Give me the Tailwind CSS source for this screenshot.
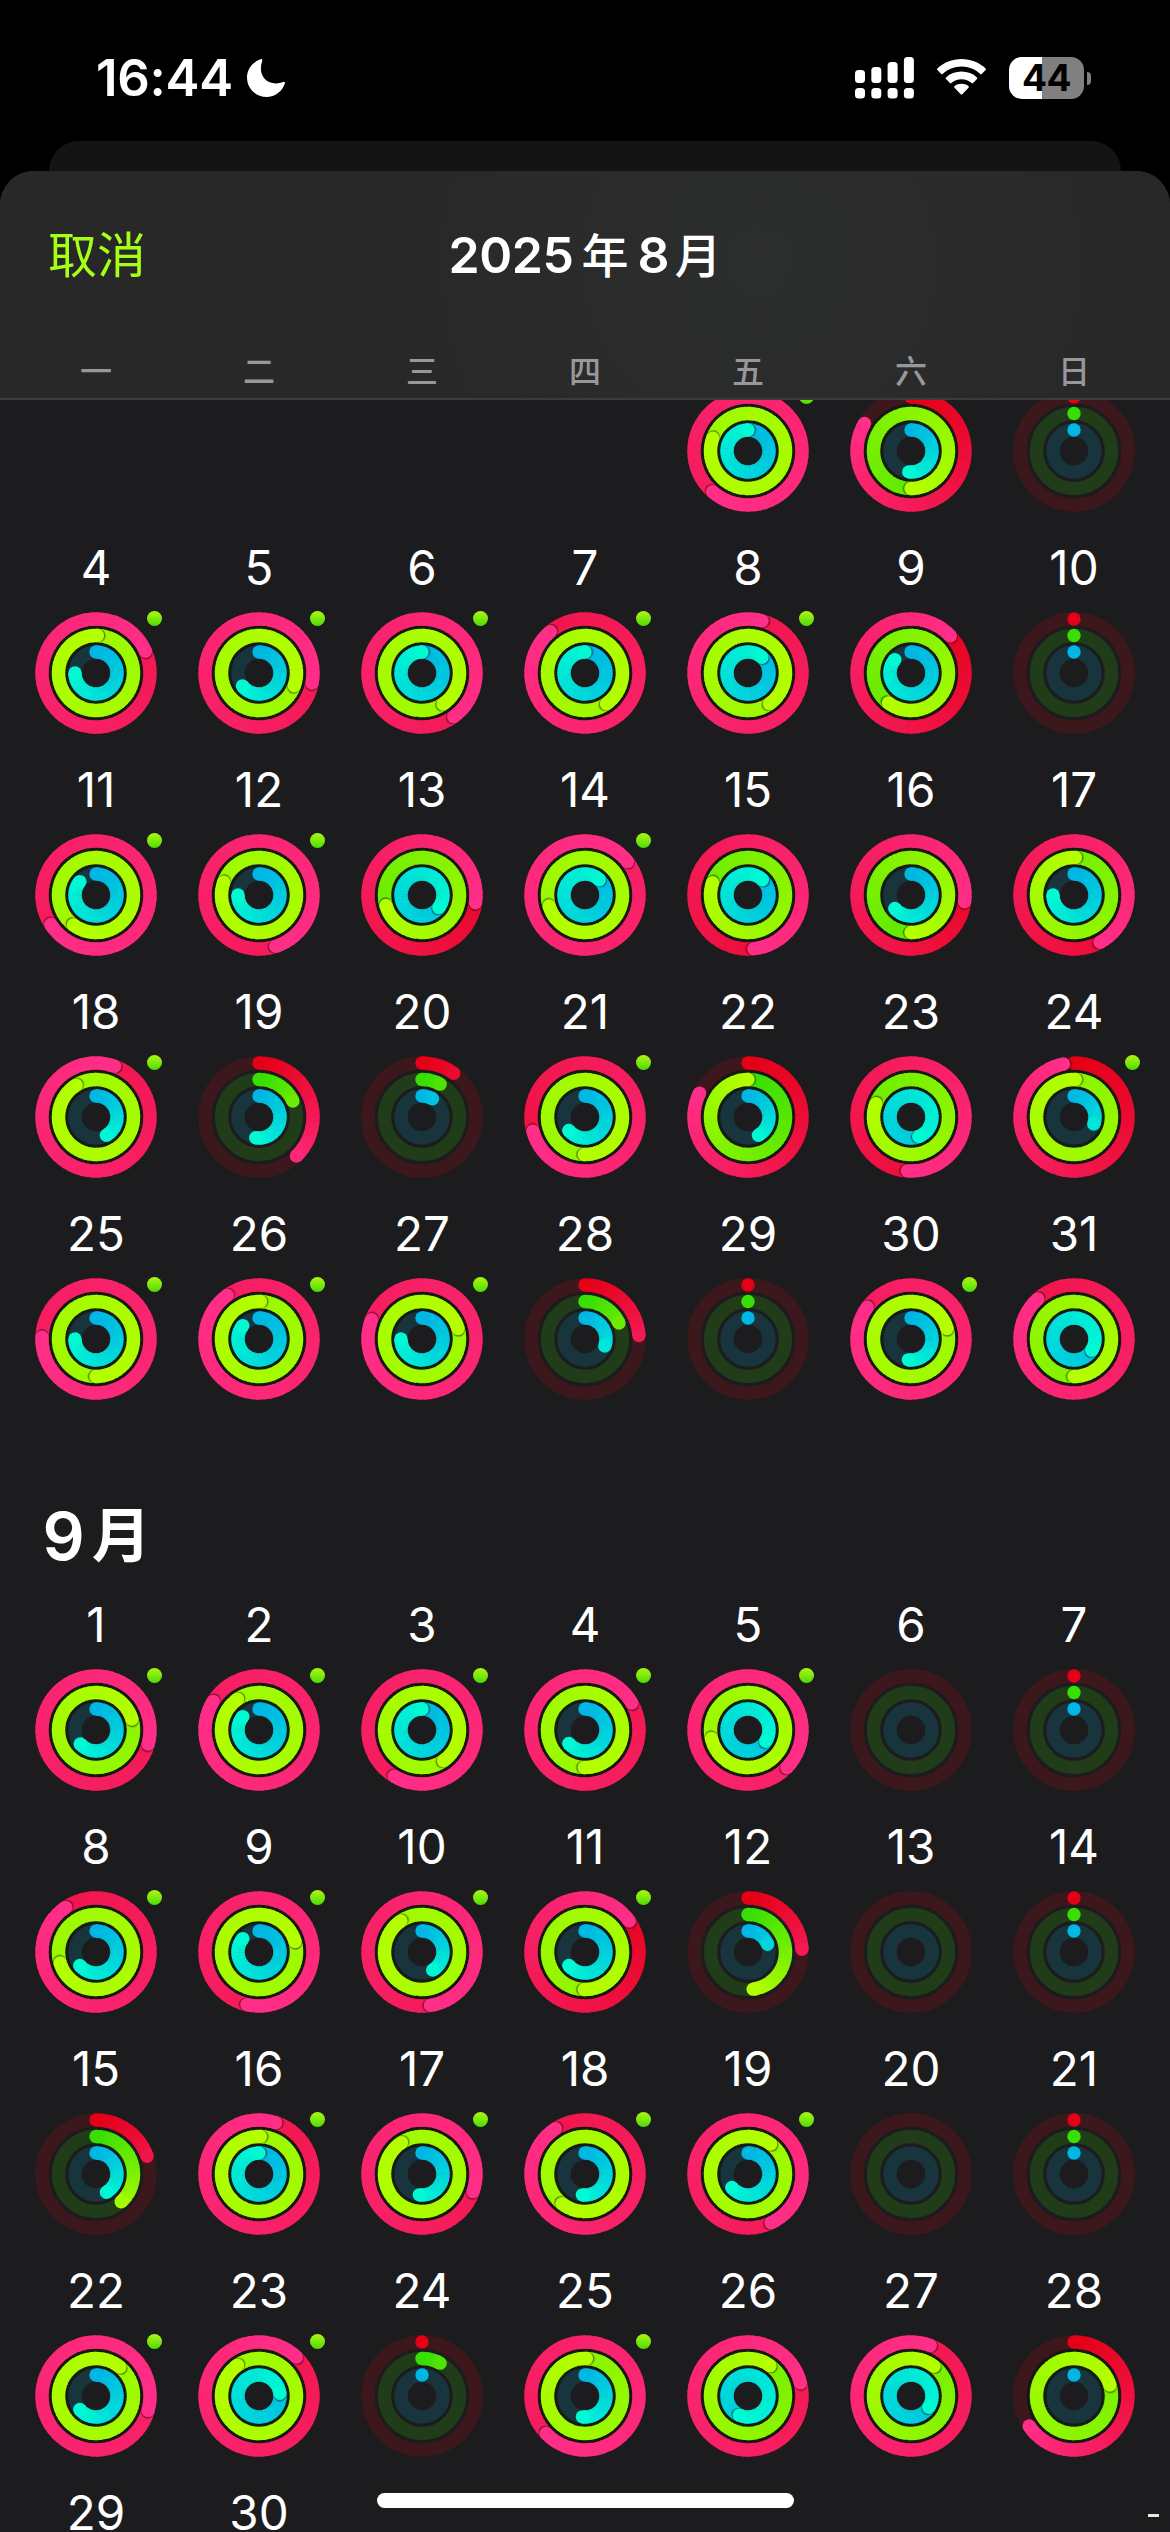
<!DOCTYPE html>
<html lang="zh-CN">
<head>
    <meta charset="UTF-8">
    <meta name="viewport" content="width=device-width, initial-scale=1.0">
    <title>健身记录</title>
    <script src="https://cdn.jsdelivr.net/npm/@tailwindcss/browser@4"></script>
</head>
<style>
    body {
        font-family: Inter, 'Noto Sans CJK SC', sans-serif;
    }
</style>
<body class="bg-black text-white">
    <div class="relative flex h-[2532px] w-[1170px] flex-col overflow-hidden">
        <!-- Status bar -->
        <div class="flex h-[141px] shrink-0 items-start justify-between pt-[56px] pr-[79px] pl-[96px]">
            <div class="flex h-[44px] items-center gap-[13px]">
                <span class="text-[51px] leading-[44px] font-semibold tracking-[-0.3px]">16:44</span>
                <svg class="h-[40px] w-[40px]" viewBox="0 0 40 40" fill="#fff">
                    <path d="M14.5 1.2C15.6 .7 16.6 1.7 16.2 2.9C15.3 5.4 14.9 7.9 14.9 10.5C14.9 19.4 21 25.4 29.8 25.4C32.6 25.4 35 24.9 37.1 24C38.3 23.5 39.3 24.5 38.8 25.7C35.9 33.6 28.8 39 20.6 39C9.7 39 1 30.3 1 19.4C1 11.2 6.3 4.2 14.5 1.2Z"/>
                </svg>
            </div>
            <div class="flex h-[44px] items-center">
                <svg class="h-[42px] w-[59px]" viewBox="0 0 59 42" fill="#fff">
                    <rect x="0" y="13" width="10" height="13" rx="3.5"/>
                    <rect x="16.3" y="10" width="10" height="16" rx="3.5"/>
                    <rect x="32.6" y="5" width="10" height="21" rx="3.5"/>
                    <rect x="48.9" y="0" width="10" height="26" rx="3.5"/>
                    <rect x="0" y="31" width="10" height="10.5" rx="3.5"/>
                    <rect x="16.3" y="31" width="10" height="10.5" rx="3.5"/>
                    <rect x="32.6" y="31" width="10" height="10.5" rx="3.5"/>
                    <rect x="48.9" y="31" width="10" height="10.5" rx="3.5"/>
                </svg>
                <svg class="ml-[22px] h-[38px] w-[51px]" viewBox="0 0 51 38" fill="#fff">
                    <path d="M25.5 7.600C32.700 7.600 39.300 10.400 44.300 15C44.700 15.400 45.300 15.400 45.700 15L49.600 11.100C50.100 10.600 50.100 9.900 49.600 9.400C43.300 3.500 34.800 0 25.500 0C16.200 0 7.700 3.500 1.400 9.400C.9 9.900 .9 10.600 1.400 11.100L5.300 15C5.700 15.400 6.300 15.400 6.700 15C11.700 10.400 18.300 7.600 25.500 7.600Z"/>
                    <path d="M25.5 20.200C29.400 20.200 33 21.700 35.700 24.100C36.100 24.500 36.700 24.500 37.100 24.100L41 20.100C41.500 19.600 41.500 18.900 41 18.400C36.900 14.600 31.500 12.500 25.500 12.500C19.500 12.500 14.100 14.600 10 18.400C9.500 18.900 9.500 19.600 10 20.100L13.900 24.100C14.300 24.500 14.900 24.500 15.300 24.100C18 21.700 21.600 20.200 25.500 20.200Z"/>
                    <path d="M32.5 28.800C33 28.300 33 27.600 32.400 27.100C30.500 25.600 28.100 24.800 25.500 24.800C22.900 24.800 20.500 25.600 18.600 27.100C18 27.600 18 28.300 18.500 28.800L24.700 35.200C25.200 35.700 25.800 35.700 26.300 35.200Z"/>
                </svg>
                <div class="ml-[22px] flex h-[42px] w-[75px] items-center justify-center rounded-[13px] bg-linear-to-r from-white from-44% to-[#808080] to-44%">
                    <span class="text-[37px] leading-[42px] font-bold tracking-[-0.5px] text-black">44</span>
                </div>
                <div class="ml-[3px] h-[13px] w-[4px] rounded-r-full bg-[#808080]"></div>
            </div>
        </div>

        <!-- Edge of the sheet behind -->
        <div class="mx-[49px] h-[30px] shrink-0 rounded-t-[30px] bg-[#141414]"></div>

        <!-- Sheet -->
        <div class="flex min-h-0 flex-1 flex-col overflow-hidden rounded-t-[34px] bg-[#1c1c1e]">
            <header class="z-10 flex h-[229px] shrink-0 flex-col border-b-2 border-[#3c3c3d] bg-[#282828] bg-[radial-gradient(circle_at_760px_90px,#2c2d2d,#282828_380px)]">
                <div class="grid h-[168px] grid-cols-3 items-center px-[48px]">
                    <button class="text-left text-[49px] leading-none text-[#a6ff17]">取消</button>
                    <h1 class="flex items-center justify-center text-[50px] leading-none font-semibold whitespace-nowrap"><span class="tracking-[-0.4px]">2025</span><span class="ml-[8px] text-[47px] font-medium">年</span><span class="ml-[9px]">8</span><span class="ml-[5px] text-[47px] font-medium">月</span></h1>
                </div>
                <div class="mx-[14.5px] grid grid-cols-7 pt-[17px] text-center text-[32px] leading-[32px] font-medium text-[#98989c]">
                    <span>一</span><span>二</span><span>三</span><span>四</span><span>五</span><span>六</span><span>日</span>
                </div>
            </header>

            <main class="min-h-0 flex-1 overflow-hidden px-[14.5px]">
                <div id="august" class="-mt-[84px] grid grid-cols-7 gap-y-[26px]"></div>
                <h2 class="flex h-[195px] items-center gap-[7px] pt-[76px] pl-[28px] text-[66px] font-semibold leading-none"><span>9</span><span class="text-[59px]">月</span></h2>
                <div id="september" class="grid grid-cols-7 gap-y-[26px]"></div>
            </main>
        </div>

        <!-- Home indicator -->
        <div class="absolute bottom-[24px] left-[377px] h-[15px] w-[417px] rounded-full bg-white"></div>
        <div class="absolute right-[11px] bottom-[15px] h-[3px] w-[11px] bg-white/90"></div>
    </div>

    <script>
        // Each day: [move, exercise, stand, award], in laps of the ring.
        // null = no data, 0 = only the starting dot
        const august = [
            [2.614, 5.805, 1, 1], [.835, 1.5, .517, 0], [0, 0, 0, 0],
            [2.184, 5.006, .75, 1], [2.28, 5.305, .645, 1], [2.4, 5.405, 1, 1], [1.889, 5.403, 1, 1], [2.042, 5.403, 1.115, 1], [1.13, 1.603, .86, 0], [0, 0, 0, 0],
            [2.658, 5.603, .86, 1], [2.45, 5.805, .75, 1], [1.273, 1.705, 1.352, 0], [3.144, 4.703, 1.12, 1], [1.483, 1.803, 1.12, 0], [1.27, 1.5, .64, 0], [1.42, 2.006, .75, 0],
            [2.056, 5.911, .417, 1], [.378, .18, .525, 0], [.1, .08, .083, 0], [1.708, 4.503, .64, 1], [.823, 1, .417, 0], [1.511, 1.808, 1.44, 0], [.969, 3.006, .305, 1],
            [2.755, 5.5, .75, 1], [2.9, 5.006, .86, 1], [2.808, 5.205, .75, 1], [.24, .18, .305, 0], [0, 0, 0, 0], [2.85, 5.205, .52, 1], [1.883, 2.5, 1.34, 0]
        ];
        const september = [
            [2.292, 3.203, .635, 1], [2.839, 5.903, .86, 1], [2.586, 5.403, 1, 1], [2.167, 4.503, .64, 1], [3.372, 4.714, 1.34, 1], null, [0, 0, 0, 0],
            [1.905, 4.703, .64, 1], [2.536, 5.205, .86, 1], [2.475, 5.905, .415, 1], [1.153, 3.503, .64, 1], [.242, .478, .19, 0], null, [0, 0, 0, 0],
            [.197, .383, .417, 0], [2.05, 5.006, 1, 1], [2.303, 5.908, .52, 1], [1.908, 5.605, .52, 1], [2.43, 5.103, .64, 1], null, [0, 0, 0, 0],
            [3.293, 5.11, .64, 1], [2.122, 5.903, 1.23, 1], [0, .08, 0, 0], [2.628, 3.006, .52, 1], [2.211, 2.1, 1.567, 0], [2.058, 2.105, 1.34, 0], [.656, 2.203, 0, 0],
            null, null
        ];

        const rings = [
            { r: 54, track: '#3c171b', from: [228, 0, 22], to: [255, 46, 136] },
            { r: 37.5, track: '#203c18', from: [56, 222, 4], to: [180, 255, 0] },
            { r: 21, track: '#18343c', from: [0, 182, 228], to: [0, 250, 212] }
        ];
        const STROKE = 13.4;

        function point(r, lap) {
            const a = lap * Math.PI * 2;
            return (r * Math.sin(a)).toFixed(2) + ' ' + (-r * Math.cos(a)).toFixed(2);
        }

        function dot(r, lap, color, radius = STROKE / 2) {
            const [x, y] = point(r, lap).split(' ');
            return `<circle cx="${x}" cy="${y}" r="${radius}" fill="${color}"/>`;
        }

        function mix(ring, t) {
            const c = ring.from.map((v, i) => Math.round(v + (ring.to[i] - v) * t));
            return `rgb(${c.join(',')})`;
        }

        function drawRing(ring, value) {
            const { r } = ring;
            let out = `<circle r="${r}" fill="none" stroke="${ring.track}" stroke-width="${STROKE}"/>`;
            if (value === null) return out;
            if (value < 1.001) out += dot(r, 0, mix(ring, 0));
            if (value === 0) return out;

            // Short arcs do not reach the end colour yet
            const reach = Math.min(1, value * 2.3);
            // Only the last lap is visible, older ones lie underneath
            const start = Math.max(0, value - 1);
            const steps = Math.ceil((value - start) * 60);
            const size = (value - start) / steps;
            for (let i = 0; i < steps; i++) {
                const a = start + i * size;
                const b = a + size + (i < steps - 1 ? .004 : 0);
                out += `<path d="M${point(r, a)}A${r} ${r} 0 0 1 ${point(r, b)}" fill="none" stroke="${mix(ring, reach * a / value)}" stroke-width="${STROKE}"/>`;
            }
            // Shadow in front of the tip when it overlaps the start
            if (value > .93) {
                out += dot(r, value + 2.6 / (r * 6.283), 'rgba(0,0,0,.1)', 6.3);
                out += dot(r, value + 1.8 / (r * 6.283), 'rgba(0,0,0,.16)', 6.5);
                out += dot(r, value + 1 / (r * 6.283), 'rgba(0,0,0,.24)', 6.7);
            }
            return out + dot(r, value, mix(ring, reach));
        }

        function drawRings(day) {
            const values = day || [null, null, null];
            // Darker gaps between filled rings
            let out = values[1] >= 1 ? '<circle r="45.75" fill="none" stroke="#17180f" stroke-width="4"/><circle r="29.25" fill="none" stroke="#141c14" stroke-width="4"/>' : '';
            rings.forEach((ring, i) => { out += drawRing(ring, values[i]); });
            return `<svg class="h-[122px] w-[122px]" viewBox="-61 -61 122 122">${out}</svg>`;
        }

        function renderMonth(id, days, offset) {
            let html = '';
            for (let i = 0; i < offset; i++) html += '<div></div>';
            days.forEach((day, i) => {
                // The first week of August is scrolled under the header
                const label = offset && i < 7 - offset
                    ? '<span class="h-[60px]"></span>'
                    : `<span class="text-[47.5px] leading-[60px]">${i + 1}</span>`;
                html += `<div class="flex flex-col items-center gap-[14px]">
                    ${label}
                    <div class="relative">
                        ${drawRings(day)}
                        ${day && day[3] ? '<div class="absolute -top-[1px] -right-[5px] h-[15px] w-[15px] rounded-full bg-linear-to-b from-[#aaf612] to-[#46dc06]"></div>' : ''}
                    </div>
                </div>`;
            });
            document.getElementById(id).innerHTML = html;
        }

        renderMonth('august', august, 4);
        renderMonth('september', september, 0);
    </script>
</body>
</html>
